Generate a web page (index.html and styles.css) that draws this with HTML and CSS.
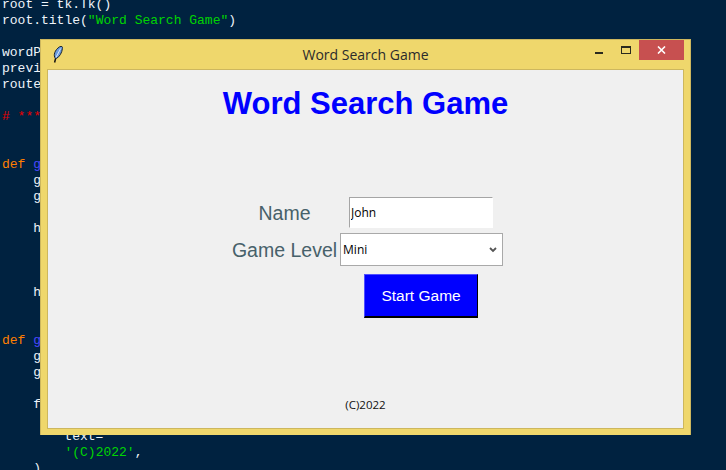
FILE: index.html
```html
<!DOCTYPE html>
<html lang="en">
<head>
<meta charset="utf-8">
<title>Word Search Game</title>
<link rel="stylesheet" href="styles.css">
</head>
<body>
<pre class="code">root = tk.Tk()
root.title(<span class="str">"Word Search Game"</span>)

wordP
previ
route

<span class="cmt"># ***</span>


<span class="kw">def</span> <span class="fn">g</span>
    g
    g

    h



    h


<span class="kw">def</span> <span class="fn">g</span>
    g
    g

    f

        text=
        <span class="str">'(C)2022'</span>,
    )</pre>
<section class="window">
  <header class="titlebar">
    <svg class="feather" width="10" height="17" viewBox="0 0 10 17" aria-hidden="true">
      <path d="M1.6 16.5 L3 11" stroke="#111" stroke-width="1.5" fill="none"/>
      <path d="M2.4 12.4 C0 9.5 1.6 4 6.6 0.8 C9 -0.2 9.8 0.8 9.4 2.6 C9 6.5 6.6 11 3.4 12.4 Z" fill="#6c9ce0" stroke="#18222e" stroke-width="1"/>
      <path d="M3 11.4 L7.6 2.6" stroke="#d6e6f8" stroke-width="1" fill="none"/>
    </svg>
    <span class="window-title">Word Search Game</span>
    <div class="controls">
      <span class="ctl"><i class="min"></i></span>
      <span class="ctl"><i class="max"></i></span>
      <span class="close">
        <svg width="9" height="8" viewBox="0 0 9 8" aria-hidden="true"><path d="M1 0.5 L8 7.5 M8 0.5 L1 7.5" stroke="#fff" stroke-width="1.6" fill="none"/></svg>
      </span>
    </div>
  </header>
  <main class="client">
    <h1 class="heading">Word Search Game</h1>
    <form class="form">
      <label class="label" for="name">Name</label>
      <input class="entry" id="name" type="text" value="John">
      <label class="label" for="level">Game Level</label>
      <select class="level" id="level"><option>Mini</option></select>
      <button class="start" type="button">Start Game</button>
    </form>
    <footer class="copy">(C)2022</footer>
  </main>
</section>
</body>
</html>
```
FILE: styles.css
```css
html, body { margin: 0; height: 100%; }
body {
  width: 726px;
  height: 470px;
  overflow: hidden;
  background: #002240;
  position: relative;
}
.code {
  margin: -3px 0 0 2px;
  font: 13px/16px "Liberation Mono", monospace;
  color: #eef4fa;
}
.str { color: #00d400; }
.cmt { color: #e80000; }
.kw { color: #ff7f00; }
.fn { color: #4848ff; }

.window {
  position: absolute;
  left: 40px;
  top: 39px;
  width: 651px;
  height: 396px;
  box-sizing: border-box;
  background: #efd76c;
  border: 1px solid #cdb75e;
  border-bottom: 0;
  display: flex;
  flex-direction: column;
  padding: 0 6px 6px;
}
.titlebar {
  height: 29px;
  flex: none;
  display: flex;
  align-items: flex-start;
  position: relative;
}
.feather { margin: 6px 0 0 6px; }
.window-title {
  position: absolute;
  left: 0;
  right: 0;
  top: 5px;
  text-align: center;
  font: 14px/20px "Open Sans", sans-serif;
  color: #2b2b2b;
}
.controls {
  margin-left: auto;
  display: flex;
  align-items: flex-start;
  position: relative;
}
.ctl {
  width: 27px;
  height: 20px;
  display: flex;
  justify-content: center;
}
.min { width: 8px; height: 2px; margin-top: 12px; background: #2a2a1e; }
.max { box-sizing: border-box; width: 10px; height: 8px; margin-top: 6px; border: 1px solid #2a2a1e; border-top-width: 2px; }
.close {
  width: 45px;
  height: 20px;
  background: #c75050;
  display: flex;
  align-items: center;
  justify-content: center;
}
.client {
  flex: 1;
  background: #f0f0f0;
  border: 1px solid #cdb75e;
  display: flex;
  flex-direction: column;
  align-items: center;
}
.heading {
  margin: 16px 0 0;
  font: bold 31px/36px "Liberation Sans", sans-serif;
  color: #0000ff;
}
.form {
  margin: 75px 0 0 4px;
  display: grid;
  grid-template-columns: auto 163px;
  grid-template-rows: 31px 33px 47px;
  column-gap: 3px;
  row-gap: 5px;
  align-items: center;
  justify-items: center;
}
.label {
  font: 19.5px/24px "Liberation Sans", sans-serif;
  color: #47616a;
}
.entry {
  box-sizing: border-box;
  width: 144px;
  height: 31px;
  margin-right: 1px;
  padding: 0 1px;
  border: 1px solid #fff;
  border-top-color: #a5a5a5;
  border-left-color: #a5a5a5;
  background: #fff;
  font: 12px "Open Sans", sans-serif;
  color: #000;
  outline: 0;
}
.level {
  box-sizing: border-box;
  width: 163px;
  height: 33px;
  border: 1px solid #a9a9a9;
  border-radius: 0;
  appearance: none;
  background: #fff url("data:image/svg+xml,%3Csvg xmlns='http://www.w3.org/2000/svg' width='8' height='6'%3E%3Cpath d='M1 1l3 3 3-3' fill='none' stroke='%23555' stroke-width='1.8'/%3E%3C/svg%3E") no-repeat right 5px center;
  font: 12px "Open Sans", sans-serif;
  color: #000;
  padding: 0 0 0 2px;
}
.start {
  grid-column: 2;
  align-self: end;
  margin-right: 1px;
  box-sizing: border-box;
  width: 114px;
  height: 44px;
  background: #0000ff;
  color: #fff;
  font: 15.5px "Liberation Sans", sans-serif;
  border: 1px solid #000;
  border-top-color: #5050ff;
  border-left-color: #5050ff;
  border-bottom-width: 2px;
  padding: 1px 0 0;
}
.copy {
  margin-top: auto;
  margin-bottom: 15px;
  font: 11.5px/16px "Open Sans", sans-serif;
  color: #111;
}
```
